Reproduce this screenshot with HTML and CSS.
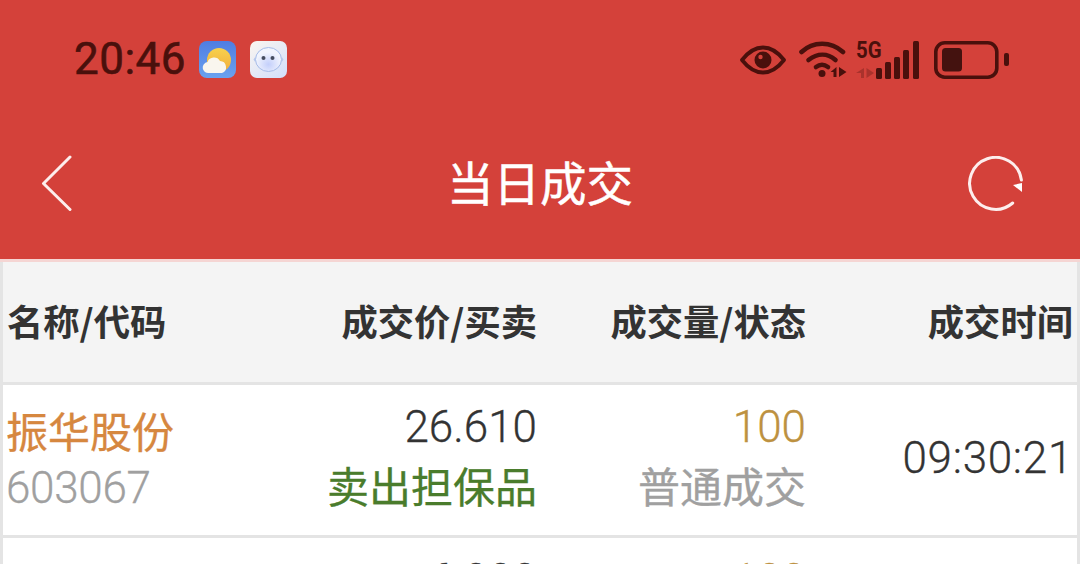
FILE: index.html
```html
<!DOCTYPE html>
<html lang="zh">
<head>
<meta charset="utf-8">
<title>当日成交</title>
<link rel="stylesheet" href="styles.css">
</head>
<body>
<div class="app">
  <header class="top">
    <div class="status">
      <div class="status-left">
        <span class="clock">20:46</span>
        <svg class="app-icon weather" viewBox="0 0 37 37">
          <defs>
            <linearGradient id="wbg" x1="0" y1="0" x2="0" y2="1"><stop offset="0" stop-color="#4f7de2"/><stop offset="1" stop-color="#6aa2ef"/></linearGradient>
            <linearGradient id="sun" x1="0" y1="0" x2="0" y2="1"><stop offset="0" stop-color="#f7d14d"/><stop offset="1" stop-color="#f2ae3c"/></linearGradient>
          </defs>
          <rect width="37" height="37" rx="8" fill="url(#wbg)"/>
          <circle cx="20" cy="19" r="12" fill="url(#sun)"/>
          <path d="M10 32a5.500 5.500 0 0 1 -1.500-11a7 7 0 0 1 12.500-1a6.200 6.200 0 0 1 2 12z" fill="#f9f6ee"/>
        </svg>
        <svg class="app-icon robot" viewBox="0 0 37 37">
          <defs>
            <linearGradient id="rbg" x1="0" y1="0" x2="0.800" y2="1"><stop offset="0" stop-color="#fbf5ef"/><stop offset="1" stop-color="#d5e1fb"/></linearGradient>
            <radialGradient id="rface" cy="0.700"><stop offset="0" stop-color="#c3cffb"/><stop offset="1" stop-color="#f1f4fd"/></radialGradient>
          </defs>
          <rect width="37" height="37" rx="7" fill="url(#rbg)"/>
          <ellipse cx="18.500" cy="18.500" rx="13" ry="12" fill="url(#rface)" stroke="#a5bbe8" stroke-width="1"/>
          <path d="M3.500 18.500l2-3v6zM33.500 18.500l-2-3v6z" fill="#b7c8ec"/>
          <circle cx="13.500" cy="17" r="2" fill="#454c5e"/>
          <circle cx="22.500" cy="17" r="2" fill="#454c5e"/>
        </svg>
      </div>
      <div class="status-right">
        <svg class="eye" viewBox="0 0 46 30">
          <path d="M2 15C9 6 15 2.500 23 2.500S37 6 44 15c-7 9-13 12.500-21 12.500S9 24 2 15z" fill="none" stroke="#4a100c" stroke-width="3.800" stroke-linejoin="round"/>
          <circle cx="23" cy="15" r="8.500" fill="#4a100c"/>
          <circle cx="20.500" cy="12" r="2.200" fill="#d4413a"/>
        </svg>
        <svg class="wifi" viewBox="0 0 48 38">
          <path d="M2.500 12C14 1 32 1 44 12" fill="none" stroke="#4a100c" stroke-width="4.600" stroke-linecap="round"/>
          <path d="M9.500 20c9-7 19-7 27 0" fill="none" stroke="#4a100c" stroke-width="4.600" stroke-linecap="round"/>
          <path d="M17 27c4-3 8-3 12 0" fill="none" stroke="#4a100c" stroke-width="4.600" stroke-linecap="round"/>
          <circle cx="23" cy="33.500" r="3.500" fill="#4a100c"/>
          <path d="M37.500 27v10h-3v-5h-3zM40 27l7.500 5-7.500 5z" fill="#4a100c"/>
        </svg>
        <div class="cell">
          <span class="five-g">5G</span>
          <svg class="cell-svg" viewBox="0 0 64 38">
            <path d="M8 27v10H5v-5H0zM10.500 27l7.500 5-7.500 5z" fill="#4a100c" opacity=".3"/>
            <rect x="20" y="27" width="6" height="11" rx="1.500" fill="#4a100c"/>
            <rect x="29" y="21" width="6" height="17" rx="1.500" fill="#4a100c"/>
            <rect x="38" y="16" width="6" height="22" rx="1.500" fill="#4a100c"/>
            <rect x="47" y="9" width="6" height="29" rx="1.500" fill="#4a100c"/>
            <rect x="57" y="0" width="6" height="38" rx="1.500" fill="#4a100c"/>
          </svg>
        </div>
        <svg class="battery" viewBox="0 0 75 38">
          <rect x="1.800" y="1.800" width="61" height="34.400" rx="9" fill="none" stroke="#4a100c" stroke-width="3.600"/>
          <rect x="8" y="7" width="20" height="23.500" rx="3.500" fill="#44120f"/>
          <rect x="70" y="12" width="5" height="13" rx="2" fill="#4a100c"/>
        </svg>
      </div>
    </div>
    <div class="nav">
      <svg class="back" viewBox="0 0 32 58">
        <path d="M29 2L2.500 28.500 29 54.500" fill="none" stroke="#fdeeed" stroke-width="3" stroke-linecap="round" stroke-linejoin="round"/>
      </svg>
      <h1 class="title">当日成交</h1>
      <svg class="refresh" viewBox="0 0 56 56">
        <path d="M44.700 47A26 26 0 1 1 53.400 24" fill="none" stroke="#fdeeed" stroke-width="3" stroke-linecap="round"/>
        <path d="M45 29l9-2v9z" fill="#fff"/>
      </svg>
    </div>
  </header>
  <main class="table">
    <div class="row head">
      <div class="c1">名称/代码</div>
      <div class="c2">成交价/买卖</div>
      <div class="c3">成交量/状态</div>
      <div class="c4">成交时间</div>
    </div>
    <div class="row item">
      <div class="c1"><div class="name">振华股份</div><div class="sub num code">603067</div></div>
      <div class="c2"><div class="val num">26.610</div><div class="green side">卖出担保品</div></div>
      <div class="c3"><div class="gold num">100</div><div class="sub side">普通成交</div></div>
      <div class="c4 val num time">09:30:21</div>
    </div>
    <div class="row item">
      <div class="c1"></div>
      <div class="c2"><div class="val num">6.000</div></div>
      <div class="c3"><div class="gold num">100</div></div>
      <div class="c4"></div>
    </div>
  </main>
</div>
</body>
</html>
```
FILE: styles.css
```css
* { box-sizing: border-box; margin: 0; padding: 0; }
html, body { width: 1080px; height: 564px; overflow: hidden; background: #fff; }
body { font-family: "Noto Sans CJK SC", "Noto Sans", sans-serif; }
.app { width: 1080px; height: 564px; overflow: hidden; display: flex; flex-direction: column; }
.top { background: #d4413a; height: 259px; flex: none; }
.status { height: 120px; padding: 41px 71px 0 74px; display: flex; justify-content: space-between; align-items: flex-start; }
.status-left { display: flex; align-items: center; height: 37px; }
.clock { font-family: Roboto, sans-serif; font-size: 44px; font-weight: 400; -webkit-text-stroke: 0.6px #4a100c; color: #4a100c; letter-spacing: 0.5px; line-height: 41px; width: 125px; }
.app-icon { width: 37px; height: 37px; margin-right: 14px; display: block; }
.status-right { display: flex; align-items: flex-start; height: 37px; }
.eye { width: 46px; height: 30px; margin: 4px 13px 0 0; display: block; }
.wifi { width: 48px; height: 38px; margin: -1px 9px 0 0; display: block; }
.cell { position: relative; width: 64px; height: 38px; margin-right: 14px; }
.cell-svg { width: 64px; height: 38px; display: block; }
.five-g { position: absolute; left: 0; top: -1px; font-family: Roboto, sans-serif; font-size: 24px; font-weight: 700; line-height: 20px; color: #4a100c; transform: scaleX(.85); transform-origin: left center; }
.battery { width: 75px; height: 38px; display: block; }
.nav { height: 139px; display: grid; grid-template-columns: 1fr auto 1fr; align-items: center; padding-bottom: 12px; }
.back { width: 32px; height: 58px; display: block; margin-left: 41px; }
.refresh { width: 56px; height: 56px; display: block; justify-self: end; margin-right: 56px; }
.title { font-size: 46.5px; font-weight: 400; -webkit-text-stroke: 0.5px #fff; color: #fff; line-height: 60px; margin-bottom: 6px; }
.table { flex: 1; background: #e4e4e4; border-top: 3px solid #f5d5d3; }
.row { display: grid; grid-template-columns: 266px 268px 269px 1fr; padding-right: 4px; margin: 0 3px; }
.head { height: 120px; padding-bottom: 4px; background: #f4f4f4; font-size: 36.3px; font-weight: 700; color: #333; align-items: center; line-height: 50px; }
.head .c1 { padding-left: 4px; }
.c2, .c3, .c4 { text-align: right; }
.item { background: #fff; margin-top: 3px; font-size: 42px; height: 150px; align-items: start; padding-top: 16px; }
.item .c1 { padding-left: 3px; }
.name { color: #d6873f; line-height: 58px; -webkit-text-stroke: 0.3px #d6873f; }
.side { line-height: 64px; -webkit-text-stroke: 0.3px currentColor; }
.sub { color: #a0a0a0; }
.val { color: #333; }
.num { font-family: Roboto, sans-serif; font-size: 44px; font-weight: 300; -webkit-text-stroke: 0.3px currentColor; letter-spacing: 0; line-height: 52px; }
.code { line-height: 58px; letter-spacing: -0.3px; }
.time { align-self: center; margin-bottom: 20px; line-height: 56px; letter-spacing: 0.7px; }
.green { color: #4a7c2c; }
.gold { color: #bd9140; }
```
